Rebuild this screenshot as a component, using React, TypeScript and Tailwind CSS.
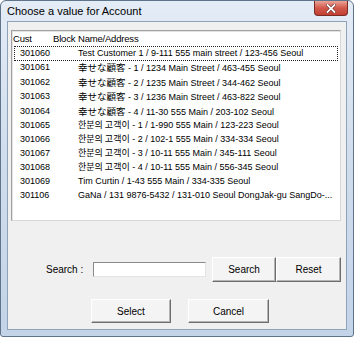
import React from 'react';

type Row = { cust: string; cjk?: string; cjkLang?: 'ja' | 'ko'; rest: string };

const rows: Row[] = [
  { cust: '301060', rest: 'Test Customer 1 / 9-111 555 main street / 123-456 Seoul' },
  { cust: '301061', cjk: '幸せな顧客', cjkLang: 'ja', rest: ' - 1 / 1234 Main Street / 463-455 Seoul' },
  { cust: '301062', cjk: '幸せな顧客', cjkLang: 'ja', rest: ' - 2 / 1235 Main Street / 344-462 Seoul' },
  { cust: '301063', cjk: '幸せな顧客', cjkLang: 'ja', rest: ' - 3 / 1236 Main Street / 463-822 Seoul' },
  { cust: '301064', cjk: '幸せな顧客', cjkLang: 'ja', rest: ' - 4 / 11-30 555 Main / 203-102 Seoul' },
  { cust: '301065', cjk: '한분의 고객이', cjkLang: 'ko', rest: ' - 1 / 1-990 555 Main / 123-223 Seoul' },
  { cust: '301066', cjk: '한분의 고객이', cjkLang: 'ko', rest: ' - 2 / 102-1 555 Main / 334-334 Seoul' },
  { cust: '301067', cjk: '한분의 고객이', cjkLang: 'ko', rest: ' - 3 / 10-11 555 Main / 345-111 Seoul' },
  { cust: '301068', cjk: '한분의 고객이', cjkLang: 'ko', rest: ' - 4 / 10-11 555 Main / 556-345 Seoul' },
  { cust: '301069', rest: 'Tim Curtin / 1-43 555 Main / 334-335 Seoul' },
  { cust: '301106', rest: 'GaNa / 131 9876-5432 / 131-010 Seoul DongJak-gu SangDo-...' },
];

function WinButton({ label, className }: { label: string; className: string }) {
  return (
    <button
      className={`flex items-center justify-center bg-[#f4f4f4] border border-t-white border-l-white border-r-[#6e6e6e] border-b-[#6e6e6e] shadow-[inset_-1px_-1px_0_#b4b4b4] text-[10px] text-black ${className}`}
    >
      {label}
    </button>
  );
}

export default function App() {
  return (
    <div
      className="w-[354px] h-[337px] flex flex-col bg-gradient-to-b from-[#e4ecf6] via-[#cfdcec] to-[#c3d4e8] border border-[#5f738a] rounded-t-[6px] rounded-b-[3px] overflow-hidden"
      style={{ fontFamily: '"Liberation Sans", Arial, sans-serif' }}
    >
      {/* title bar */}
      <div className="h-[20px] flex items-start relative">
        <span className="pl-[6px] pt-[4px] text-[11px] leading-[13px] text-black">
          Choose a value for Account
        </span>
        <div className="ml-auto mr-[5px] w-[34px] h-[15px] rounded-b-[4px] border border-t-0 border-[#7a2b24] bg-gradient-to-b from-[#e9a396] via-[#d2584b] to-[#c13f31] flex items-center justify-center">
          <svg width="10" height="9" viewBox="0 0 10 9">
            <path d="M1.5 1 L8.5 8 M8.5 1 L1.5 8" stroke="#5a1a14" strokeWidth="3" strokeLinecap="square" />
            <path d="M1.5 1 L8.5 8 M8.5 1 L1.5 8" stroke="#ffffff" strokeWidth="1.8" strokeLinecap="square" />
          </svg>
        </div>
      </div>

      {/* client area */}
      <div className="mx-[6px] mb-[6px] flex-1 border border-[#8ea3ba] bg-[#f0f0f0] flex flex-col">
        {/* list box */}
        <div className="ml-[3px] mt-[8px] w-[330px] h-[191px] bg-white border border-t-[#a0a0a0] border-l-[#a0a0a0] border-r-[#d8d8d8] border-b-[#d8d8d8] shadow-[inset_1px_1px_0_#e3e3e3] text-[9px] text-black">
          <div className="h-[15px] flex items-center pl-[1px] pt-[2px] text-[9.5px] tracking-[-0.2px]">
            <span className="w-[40px]">Cust</span>
            <span className="w-[25px]">Block</span>
            <span>Name/Address</span>
          </div>
          {rows.map((r, i) => (
            <div
              key={r.cust}
              className={`mx-[2px] flex items-center whitespace-nowrap border border-dotted ${
                i === 0 ? 'border-[#222]' : 'border-transparent'
              } ${r.cjkLang === 'ko' || i > 8 ? 'h-[14px]' : 'h-[14.5px]'}`}
            >
              <span className="w-[63px] pl-[5px] shrink-0">{r.cust}</span>
              <span>
                {r.cjk && (
                  <span
                    className={r.cjkLang === 'ja' ? 'text-[9.5px]' : 'text-[9px]'}
                    style={{
                      fontFamily:
                        r.cjkLang === 'ja'
                          ? '"Noto Sans CJK JP", sans-serif'
                          : '"Noto Sans CJK KR", sans-serif',
                    }}
                  >
                    {r.cjk}
                  </span>
                )}
                {r.rest}
              </span>
            </div>
          ))}
        </div>

        {/* search row */}
        <div className="mt-[36px] h-[25px] flex items-center pl-[38px]">
          <span className="w-[47px] text-[10px] text-black">Search :</span>
          <input
            className="w-[113px] h-[15px] bg-white border border-t-[#8a8a8a] border-l-[#8a8a8a] border-r-[#e4e4e4] border-b-[#e4e4e4] outline-none"
            type="text"
          />
          <WinButton label="Search" className="ml-[6px] w-[64px] h-[25px]" />
          <WinButton label="Reset" className="w-[65px] h-[25px]" />
        </div>

        {/* bottom buttons */}
        <div className="mt-[17px] flex pl-[83px] gap-[17px]">
          <WinButton label="Select" className="w-[80px] h-[24px]" />
          <WinButton label="Cancel" className="w-[81px] h-[24px]" />
        </div>
      </div>
    </div>
  );
}
